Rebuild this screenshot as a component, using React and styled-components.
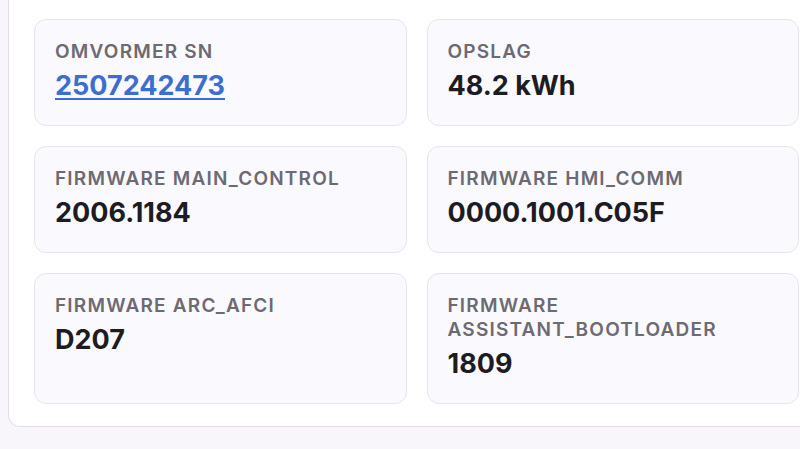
import React from 'react'
import styled, { createGlobalStyle } from 'styled-components'

const GlobalStyle = createGlobalStyle`
  html, body {
    margin: 0;
    padding: 0;
    background: #f8f6fb;
    overflow: hidden;
    font-family: 'Inter', 'Noto Sans', sans-serif;
  }
`

const Page = styled.div`
  padding-left: 8px;
  width: 1000px;
`

/* the panel scrolls past the top of the view: the row above only shows its bottom edge */
const Panel = styled.section`
  width: 815px;
  margin-top: -108px;
  padding: 0 25px 22px;
  background: #ffffff;
  border: 1px solid #e2dde8;
  border-top: none;
  border-radius: 0 0 12px 12px;
`

const Grid = styled.div`
  display: grid;
  grid-template-columns: 1fr 1fr;
  gap: 20px;
  width: 765px;
`

const Card = styled.div`
  display: flex;
  flex-direction: column;
  gap: 6px;
  min-height: ${(p) => (p.$stub ? '107px' : 'auto')};
  padding: 20px 20px 23px;
  box-sizing: border-box;
  background: #faf9fd;
  border: 1px solid #e7e4ec;
  border-radius: 12px;
`

const Label = styled.div`
  font-size: 19px;
  line-height: 24px;
  font-weight: 600;
  letter-spacing: 1.2px;
  text-transform: uppercase;
  color: #6d6a72;
`

const Value = styled.div`
  font-size: 27px;
  line-height: 32px;
  font-weight: 700;
  color: #1d1c22;
`

const SerialLink = styled.a`
  color: #3a6fd1;
  text-decoration: underline;
  text-underline-offset: 3px;
  text-decoration-thickness: 2px;
`

const items = [
  { label: 'Omvormer SN', value: '2507242473', link: true },
  { label: 'Opslag', value: '48.2 kWh' },
  { label: 'Firmware MAIN_CONTROL', value: '2006.1184' },
  { label: 'Firmware HMI_COMM', value: '0000.1001.C05F' },
  { label: 'Firmware ARC_AFCI', value: 'D207' },
  { label: 'Firmware ASSISTANT_BOOTLOADER', value: '1809' },
]

export default function App() {
  return (
    <>
      <GlobalStyle />
      <Page>
        <Panel>
          <Grid>
            <Card $stub />
            <Card $stub />
            {items.map((item) => (
              <Card key={item.label}>
                <Label>{item.label}</Label>
                <Value>
                  {item.link ? (
                    <SerialLink href="#">{item.value}</SerialLink>
                  ) : (
                    item.value
                  )}
                </Value>
              </Card>
            ))}
          </Grid>
        </Panel>
      </Page>
    </>
  )
}
